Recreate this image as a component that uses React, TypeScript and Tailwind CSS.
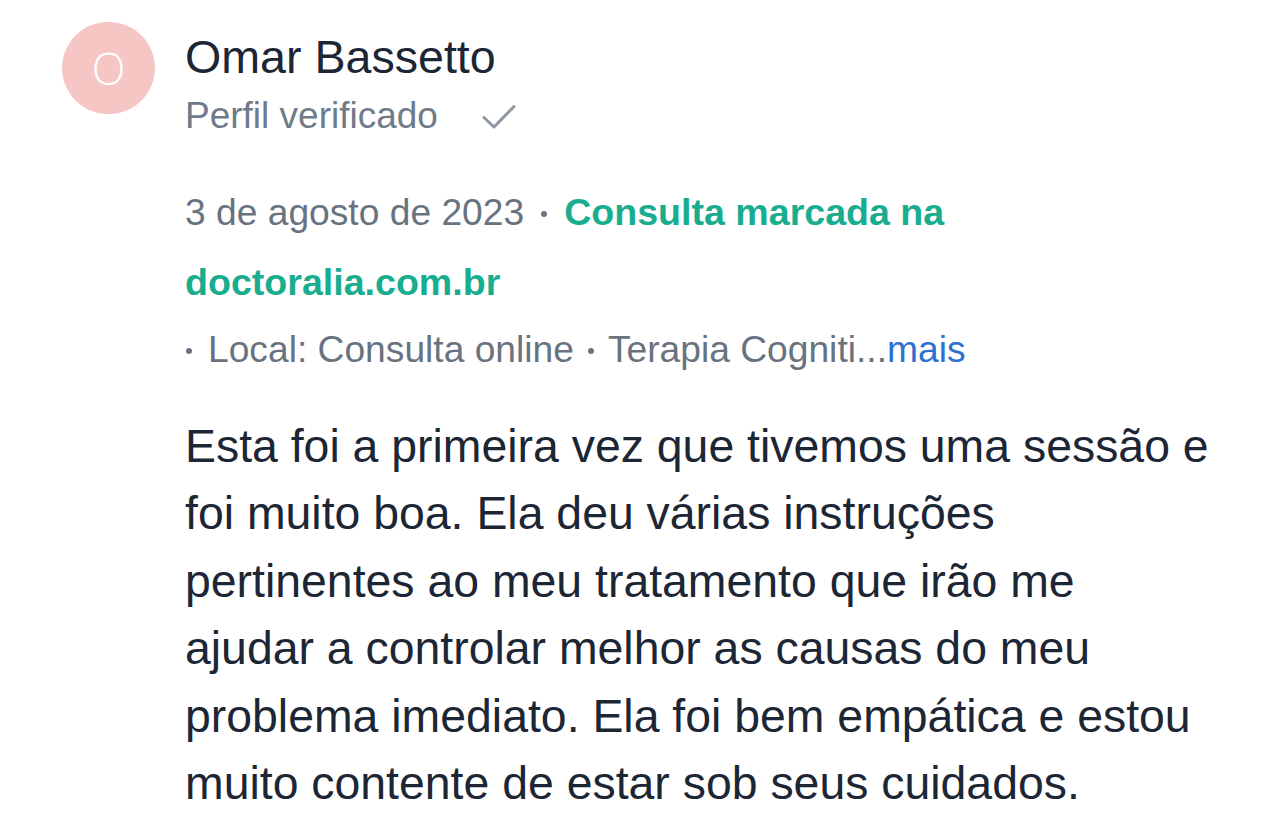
function Dot({ className = "" }: { className?: string }) {
  return (
    <span
      className={`inline-block w-[6px] h-[6px] rounded-full bg-current align-middle relative -top-[1px] ${className}`}
    />
  );
}

export default function App() {
  return (
    <div
      className="min-h-screen bg-white flex items-start pl-[62px] pt-[22px] text-[#1c2634]"
      style={{ fontFamily: '"Liberation Sans", Arial, sans-serif' }}
    >
      <div className="w-[93px] h-[92px] shrink-0 rounded-full bg-[#f5c6c3] flex items-center justify-center">
        <span
          className="text-white text-[44px] leading-none font-light"
          style={{ fontFamily: '"Open Sans", "Liberation Sans", sans-serif' }}
        >
          O
        </span>
      </div>

      <div className="ml-[30px] mt-[8px]">
        <h2 className="text-[46.6px] leading-[54px] whitespace-nowrap">Omar Bassetto</h2>
        <div className="mt-[10px] flex items-center h-[44px] text-[37px] text-[#6f7b89]">
          <span>Perfil verificado</span>
          <svg
            className="ml-[44px] mt-[2px]"
            width="34"
            height="26"
            viewBox="0 0 34 26"
            fill="none"
            stroke="#8d96a1"
            strokeWidth="3"
            strokeLinecap="round"
            strokeLinejoin="round"
          >
            <path d="M2 13.5 L12 23 L32 2.5" />
          </svg>
        </div>

        <p className="mt-[39px] text-[37.2px] leading-[70px] text-[#68737f] whitespace-nowrap">
          3 de agosto de 2023
          <Dot className="mx-[17px]" />
          <span className="font-bold text-[#19ad90] text-[37.6px]">
            Consulta marcada na
            <br />
            doctoralia.com.br
          </span>
        </p>
        <p className="text-[37.2px] leading-[64px] text-[#68737f] whitespace-nowrap">
          <Dot className="ml-[1px] mr-[16px]" />
          Local: Consulta online
          <Dot className="mx-[14px]" />
          Terapia Cogniti...
          <span className="text-[#2e6fd4]">mais</span>
        </p>

        <p className="mt-[32px] text-[46.4px] leading-[67.4px] text-[#1c2634] whitespace-nowrap">
          Esta foi a primeira vez que tivemos uma sessão e
          <br />
          foi muito boa. Ela deu várias instruções
          <br />
          pertinentes ao meu tratamento que irão me
          <br />
          ajudar a controlar melhor as causas do meu
          <br />
          problema imediato. Ela foi bem empática e estou
          <br />
          muito contente de estar sob seus cuidados.
        </p>
      </div>
    </div>
  );
}
